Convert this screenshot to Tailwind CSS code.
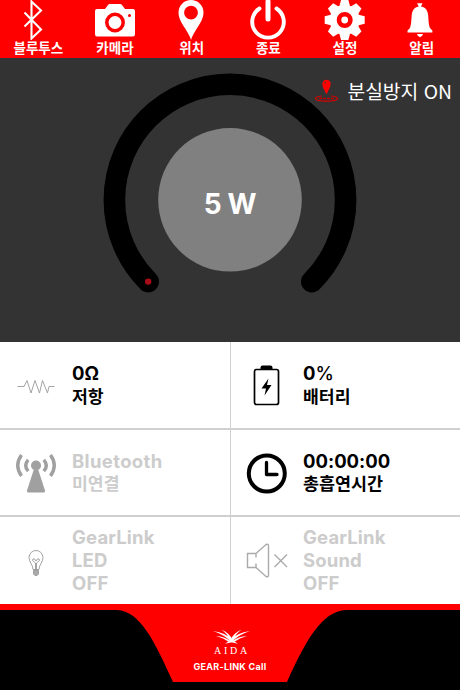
<!DOCTYPE html>
<html lang="ko">
<head>
  <meta charset="UTF-8">
  <meta name="viewport" content="width=device-width, initial-scale=1.0">
  <title>GEAR-LINK</title>
  <script src="https://cdn.jsdelivr.net/npm/@tailwindcss/browser@4"></script>
</head>
<body class="w-[460px] h-[690px] overflow-hidden bg-black font-['Inter','Noto_Sans_CJK_KR',sans-serif]">
  <!-- Toolbar -->
  <nav class="h-[58px] bg-[#fe0000] grid grid-cols-6 text-white text-[13.500px] font-bold leading-[16px] text-center">
    <a class="flex flex-col items-center">
      <svg class="w-11 h-10 shrink-0" viewBox="0 0 44 40" fill="none" stroke="currentColor" stroke-width="2.100" aria-hidden="true">
        <path d="M8.500 12.500L25 29.500L15.500 38.500V1.500L25 10.500L8.500 26.500"></path>
      </svg>
      <span>블루투스</span>
    </a>
    <a class="flex flex-col items-center">
      <svg class="w-11 h-10 shrink-0" viewBox="0 0 44 40" aria-hidden="true">
        <path fill="currentColor" d="M4 9h8l3-4q.6-1 2-1h10q1.400 0 2 1l3 4h8q2 0 2 2v23q0 2.500-2 2.500H4q-2 0-2-2.500V11q0-2 2-2z"></path>
        <circle cx="22" cy="22.500" r="8.200" fill="none" stroke="#fe0000" stroke-width="3.500"></circle>
        <circle cx="36.500" cy="15.500" r="1.500" fill="#fe0000"></circle>
      </svg>
      <span>카메라</span>
    </a>
    <a class="flex flex-col items-center">
      <svg class="w-11 h-10 shrink-0" viewBox="0 0 44 40" aria-hidden="true">
        <path fill="currentColor" fill-rule="evenodd" d="M21 0C14 0 8.500 5.500 8.500 12.500c0 6 3.500 11 7 16.500 2.500 4 4.500 7.500 5.500 11 1-3.500 3-7 5.500-11 3.500-5.500 7-10.500 7-16.500C33.500 5.500 28 0 21 0zm0 5.800a6.900 6.900 0 110 13.800 6.900 6.900 0 010-13.800z"></path>
      </svg>
      <span>위치</span>
    </a>
    <a class="flex flex-col items-center">
      <svg class="w-11 h-10 shrink-0" viewBox="0 0 44 40" fill="none" stroke="currentColor" stroke-linecap="round" aria-hidden="true">
        <path stroke-width="3.900" d="M13.500 8.500A15.800 15.800 0 1030.500 8.500"></path>
        <path stroke-width="5" d="M22 1.500V19"></path>
      </svg>
      <span>종료</span>
    </a>
    <a class="flex flex-col items-center">
      <svg class="w-11 h-10 shrink-0" viewBox="0 0 44 40" aria-hidden="true">
        <g fill="currentColor" transform="translate(21.700 20)">
          <circle r="15"></circle>
          <path id="tooth" d="M-5.500-13L-3.700-20H3.700L5.500-13z"></path>
          <use href="#tooth" transform="rotate(45)"></use>
          <use href="#tooth" transform="rotate(90)"></use>
          <use href="#tooth" transform="rotate(135)"></use>
          <use href="#tooth" transform="rotate(180)"></use>
          <use href="#tooth" transform="rotate(225)"></use>
          <use href="#tooth" transform="rotate(270)"></use>
          <use href="#tooth" transform="rotate(315)"></use>
          <circle r="5.700" fill="none" stroke="#fe0000" stroke-width="4.600"></circle>
        </g>
      </svg>
      <span>설정</span>
    </a>
    <a class="flex flex-col items-center">
      <svg class="w-11 h-10 shrink-0" viewBox="0 0 44 40" fill="currentColor" aria-hidden="true">
        <path d="M17 3.200h5.500L21 6.500c5 .8 6.800 4.500 7.200 9 .4 5 .4 10.500 2.200 13 .8 1.200 2 1.500 2 2.500v1.500H7.500V31c0-1 1.200-1.500 2-2.500 1.800-2.500 1.700-8 2.200-13 .4-4.500 2.200-8.200 7-9z"></path>
        <path d="M17 34h6l-.8 1.800-2.200 1.500-2.200-1.500z"></path>
      </svg>
      <span>알림</span>
    </a>
  </nav>

  <!-- Power dial -->
  <section class="relative h-[284px] bg-[#333] text-white">
    <svg class="block w-[460px] h-[284px]" viewBox="0 58 460 284" fill="none" aria-hidden="true">
      <path stroke="#000" stroke-width="21.600" stroke-linecap="round" d="M148.200 281.600A115.600 115.600 0 11311.800 281.600"></path>
      <circle cx="148.200" cy="281.600" r="3.200" fill="#a80c16"></circle>
      <circle cx="230" cy="199.800" r="71.800" fill="#808080"></circle>
    </svg>
    <div class="absolute inset-x-0 top-[126px] text-center text-[28px] leading-10 font-bold tracking-[-0.300px]">5 W</div>
    <div class="absolute top-[17px] right-2 h-8 flex items-center">
      <svg class="w-6 h-6 mr-[8px]" viewBox="0 0 24 24" aria-hidden="true">
        <path fill="#f00" fill-rule="evenodd" d="M11.500.8C9 .8 7.300 2.500 7.300 5c0 3.500 2.700 6.500 4.200 10.500C13 11.500 15.700 8.500 15.700 5c0-2.500-1.700-4.200-4.200-4.200zM10.200 3a.7.7 0 110 1.400.7.7 0 010-1.400z"></path>
        <path fill="none" stroke="#e00000" stroke-width="1.200" d="M7 17C2 17.500.6 18.500.6 19.500c0 1.500 4.500 2.600 10.900 2.600s10.900-1.100 10.900-2.600c0-1-1.400-2-6.400-2.500"></path>
        <path fill="none" stroke="#c00000" stroke-width="1.600" stroke-dasharray="3 1" d="M4 19.500h15"></path>
      </svg>
      <span class="text-[19.300px] font-['Noto_Sans_CJK_KR',sans-serif] whitespace-nowrap">분실방지 ON</span>
    </div>
  </section>

  <!-- Status grid -->
  <main class="h-[262px] bg-white grid grid-cols-2 grid-rows-[88px_87px_87px] text-[18.500px] leading-[23px] font-bold">
    <div class="flex items-center border-b-2 border-[#d0d0d0]">
      <svg class="w-11 h-11 mx-[14px]" viewBox="0 0 44 44" fill="none" stroke="#999" stroke-width="0.900" aria-hidden="true">
        <path d="M3.500 23.500H10l3-6L17 30 21 17.500l4.500 12.500L28.500 17.500l5 12.500L35 23.500h5.500"></path>
      </svg>
      <div class="text-black">0Ω<br><span class="text-[17.200px]">저항</span></div>
    </div>
    <div class="flex items-center border-l border-b-2 border-[#d0d0d0]">
      <svg class="w-11 h-11 mx-[14px]" viewBox="0 0 44 44" aria-hidden="true">
        <rect x="9.500" y="6.500" width="24" height="35" rx="2" fill="none" stroke="#000" stroke-width="1.700"></rect>
        <path d="M15.500 6V4.500q0-2 2-2h8q2 0 2 2V6zM23.500 15.500L16.500 25.500h4.500L19.500 32.500 26.500 22h-4.500z"></path>
      </svg>
      <div class="text-black">0<span class="font-medium tracking-[-1px]">%</span><br><span class="text-[17.200px]">배터리</span></div>
    </div>
    <div class="flex items-center border-b-2 border-[#d0d0d0]">
      <svg class="w-11 h-11 mx-[14px]" viewBox="0 0 44 44" fill="none" stroke="#a0a0a0" aria-hidden="true">
        <path fill="#a0a0a0" stroke="none" d="M20 18h4l7 21.500q.5 2-1.500 2H14.500q-2 0-1.500-2z"></path>
        <circle cx="22" cy="14.500" r="5" fill="#a0a0a0" stroke="none"></circle>
        <path stroke-width="3.400" d="M14.200 8.800q-5 5.700 0 11.400M7.500 4q-7.500 10.500 0 21M29.800 8.800q5 5.700 0 11.400M36.500 4q7.500 10.500 0 21"></path>
      </svg>
      <div class="text-[#ccc] leading-[22px]"><span class="tracking-[0.350px]">Bluetooth</span><br><span class="text-[17.200px]">미연결</span></div>
    </div>
    <div class="flex items-center border-l border-b-2 border-[#d0d0d0]">
      <svg class="w-11 h-11 mx-[14px]" viewBox="0 0 44 44" fill="none" stroke="#000" aria-hidden="true">
        <circle cx="21.800" cy="22.500" r="18" stroke-width="4"></circle>
        <path stroke-width="3.300" stroke-linecap="round" stroke-linejoin="round" d="M21.500 11.500V23.500H32"></path>
      </svg>
      <div class="text-black leading-[22px]">00:00:00<br><span class="text-[17.400px]">총흡연시간</span></div>
    </div>
    <div class="flex items-center">
      <svg class="w-11 h-11 mx-[14px]" viewBox="0 0 44 44" fill="none" stroke="#999" stroke-width="0.900" aria-hidden="true">
        <path d="M19 30.500c0-5-4-7-4-12a7 7 0 0114 0c0 5-4 7-4 12zM21.500 30.500v-6.500l-3-2.500q0-2.500 2-1.500l1.500 2 1.500-2q2-1 2 1.500l-3 2.500v6.500"></path>
        <path fill="#aaa" d="M19.500 31.500h5V35l-1.500 1.500h-2L19.500 35z"></path>
      </svg>
      <div class="text-[#ccc] tracking-[0.150px]">GearLink<br>LED<br>OFF</div>
    </div>
    <div class="flex items-center border-l border-[#d0d0d0]">
      <svg class="w-11 h-11 mx-[14px]" viewBox="0 0 44 44" fill="none" stroke="#aaa" stroke-width="1.400" aria-hidden="true">
        <path d="M11 18.500V14.500H2.500v14H11v-4M11 14.500L21 5.500q2.500-1 2.500 1.500v29q0 2.500-2.500 1.500L11 28.500M29.500 15.500L42 28M42 15.500L29.500 28"></path>
      </svg>
      <div class="text-[#ccc] tracking-[0.150px]">GearLink<br>Sound<br>OFF</div>
    </div>
  </main>

  <!-- Call button -->
  <footer class="relative h-[86px] text-white">
    <svg class="block w-[460px] h-[86px]" viewBox="0 604 460 86" aria-hidden="true">
      <path fill="#fe0000" d="M0 604H460V610H346C322 611 306 640 287 682H173C154 640 140 611 117 610H0z"></path>
      <g fill="#fff">
        <path d="M213 631Q226 632.500 234 641L232 642.500Q224 634.500 213 631zM216 636.200Q224 636 230.500 641.200L229.500 642.500Q223.500 637.800 216 636.200zM221.500 629.800Q229.500 633 232.500 640L231 641Q227 633.500 221.500 629.800z"></path>
        <path d="M250 631Q237 632.500 229 641L231 642.500Q239 634.500 250 631zM247 636.200Q239 636 232.500 641.200L233.500 642.500Q239.500 637.800 247 636.200zM241.500 629.800Q233.500 633 230.500 640L232 641Q236 633.500 241.500 629.800z"></path>
        <path d="M225 643.800L230 640.500H233L238 643.800L231.500 642.300z"></path>
      </g>
    </svg>
    <div class="absolute inset-x-0 top-[41px] text-center">
      <div class="pl-[4px] text-[10px] leading-3 tracking-[2.700px] font-['Liberation_Serif',serif]">AIDA</div>
      <div class="mt-[4px] text-[9px] leading-3 font-bold tracking-[0.300px]">GEAR-LINK Call</div>
    </div>
  </footer>
</body>
</html>
